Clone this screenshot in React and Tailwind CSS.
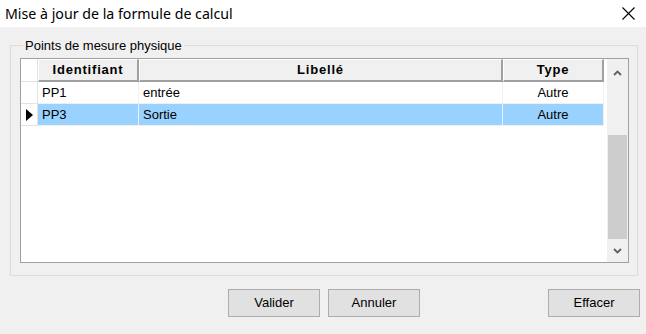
import React from 'react'

const rows = [
  { id: 'PP1', label: 'entrée', type: 'Autre', selected: false },
  { id: 'PP3', label: 'Sortie', type: 'Autre', selected: true },
]

const Chevron = ({ down }) => (
  <svg width="9" height="6" viewBox="0 0 9 6">
    <polyline
      points={down ? '1,1 4.5,4.5 8,1' : '1,5 4.5,1.5 8,5'}
      fill="none"
      stroke="#606060"
      strokeWidth="1.8"
    />
  </svg>
)

const HeaderCell = ({ w, children }) => (
  <div
    className={`${w} h-full flex items-center justify-center bg-[#f0f0f0] border-t border-l border-t-white border-l-white border-r-2 border-b-2 border-r-[#a0a0a0] border-b-[#a0a0a0] font-bold tracking-[0.8px]`}
  >
    {children}
  </div>
)

const App = () => {
  return (
    <div
      className="w-[646px] h-[334px] bg-[#f0f0f0] flex flex-col text-black text-[13px]"
      style={{ fontFamily: '"Liberation Sans", Arial, sans-serif' }}
    >
      <div className="h-[27px] bg-white flex items-center justify-between pl-[5px] pr-[11px] shrink-0">
        <span className="text-[14.2px] leading-[20px]" style={{ fontFamily: '"Noto Sans", sans-serif' }}>
          Mise à jour de la formule de calcul
        </span>
        <svg width="13" height="13" viewBox="0 0 13 13">
          <path d="M0.5 0.5 L12.5 12.5 M12.5 0.5 L0.5 12.5" stroke="#000" strokeWidth="1.1" />
        </svg>
      </div>

      <fieldset className="ml-[10px] mr-[8px] mt-[11px] border border-[#dcdcdc] pl-[9px] pr-[8px] pb-[12px]">
        <legend className="ml-[3px] px-[2px] leading-[15px]">Points de mesure physique</legend>

        <div className="mt-[5px] h-[205px] border border-[#a0a0a0] bg-white flex">
          <div className="w-[583px] flex flex-col">
            <div className="h-[23px] flex">
              <div className="w-[17px] h-full bg-white border-r border-b border-[#e3e3e3]" />
              <HeaderCell w="w-[101px]">Identifiant</HeaderCell>
              <HeaderCell w="w-[364px]">Libellé</HeaderCell>
              <HeaderCell w="w-[101px]">Type</HeaderCell>
            </div>
            {rows.map((r) => (
              <div key={r.id} className="h-[22px] flex">
                <div className="w-[17px] h-full bg-white border-r border-b border-[#e3e3e3] flex items-center justify-center">
                  {r.selected && (
                    <svg width="7" height="12" viewBox="0 0 7 12">
                      <polygon points="0,0 7,6 0,12" fill="#000" />
                    </svg>
                  )}
                </div>
                <div className={`w-[101px] h-full flex items-center pl-[4px] border-r border-b border-[#f0f0f0] ${r.selected ? 'bg-[#99d1ff]' : 'bg-white'}`}>
                  {r.id}
                </div>
                <div className={`w-[364px] h-full flex items-center pl-[4px] border-r border-b border-[#f0f0f0] ${r.selected ? 'bg-[#99d1ff]' : 'bg-white'}`}>
                  {r.label}
                </div>
                <div className={`w-[101px] h-full flex items-center justify-center border-r border-b border-[#f0f0f0] ${r.selected ? 'bg-[#99d1ff]' : 'bg-white'}`}>
                  {r.type}
                </div>
              </div>
            ))}
          </div>
          <div className="w-[3px]" />
          <div className="w-[21px] bg-[#f0f0f0] flex flex-col">
            <div className="h-[28px] flex items-center justify-center">
              <Chevron />
            </div>
            <div className="h-[48px]" />
            <div className="h-[104px] bg-[#cdcdcd] mx-[1px]" />
            <div className="flex-1" />
            <div className="h-[22px] flex items-center justify-center">
              <Chevron down />
            </div>
          </div>
        </div>
      </fieldset>

      <div className="flex pl-[228px] pr-[6px] mt-[13px]">
        <button className="w-[92px] h-[28px] bg-[#e1e1e1] border border-[#adadad]">Valider</button>
        <button className="w-[92px] h-[28px] bg-[#e1e1e1] border border-[#adadad] ml-[8px]">Annuler</button>
        <button className="w-[92px] h-[28px] bg-[#e1e1e1] border border-[#adadad] ml-auto">Effacer</button>
      </div>
    </div>
  )
}

export default App
